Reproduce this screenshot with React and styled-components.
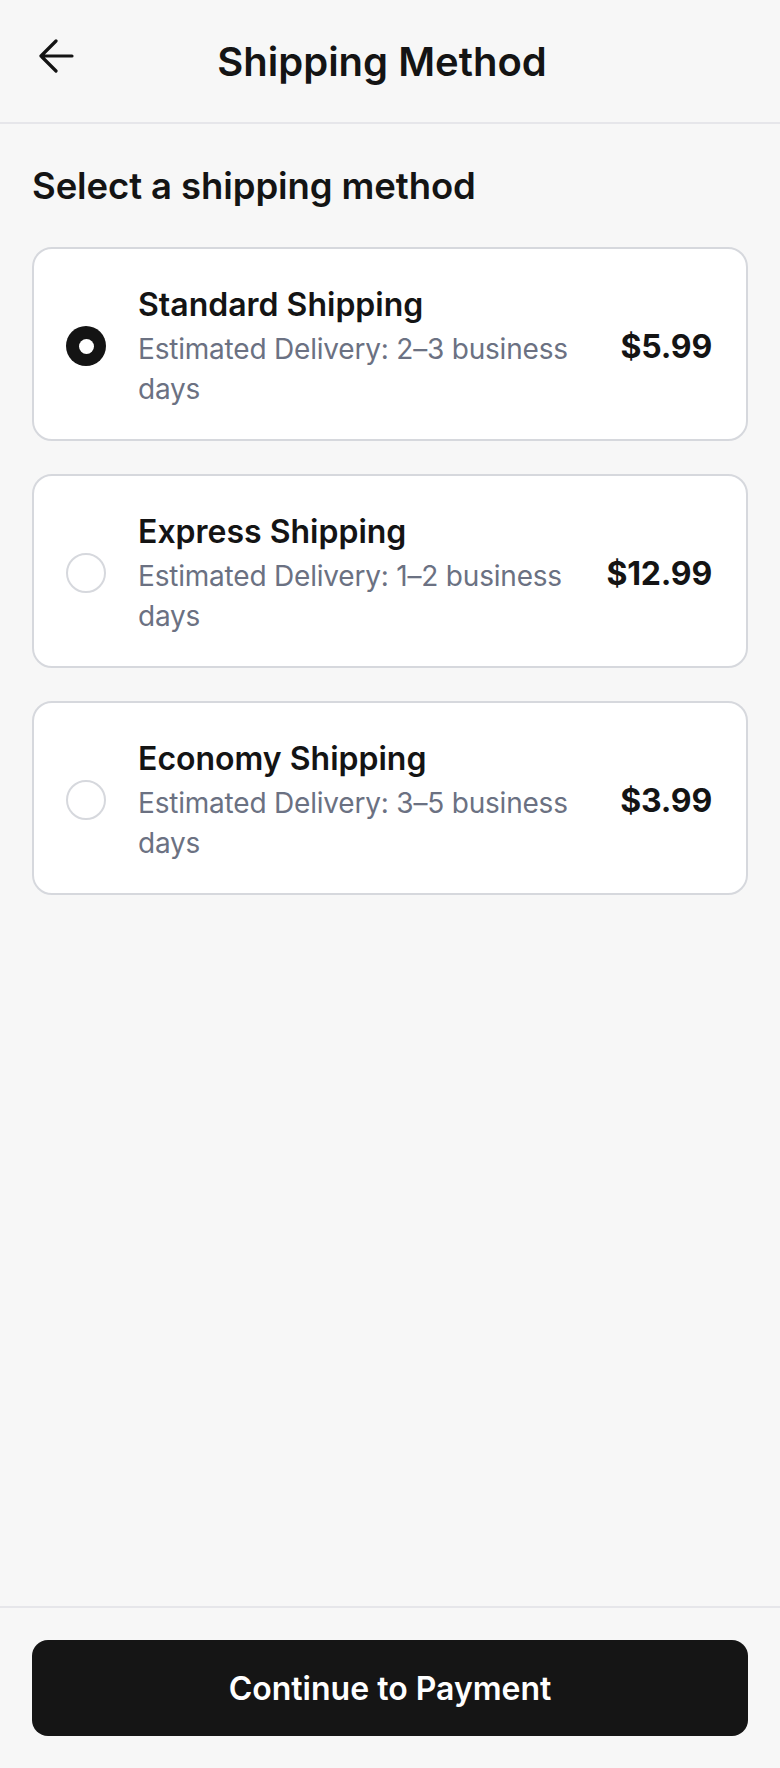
import React, { useState } from 'react'
import styled, { createGlobalStyle } from 'styled-components'

const GlobalStyle = createGlobalStyle`
  * { box-sizing: border-box; }
  html, body { margin: 0; padding: 0; background: #f7f7f7; }
  body {
    font-family: Inter, "Noto Sans", "Liberation Sans", sans-serif;
    color: #141414;
    -webkit-font-smoothing: antialiased;
  }
`

const Page = styled.div`
  min-height: 100vh;
  display: flex;
  flex-direction: column;
  background: #f7f7f7;
`

const Header = styled.header`
  display: flex;
  align-items: flex-start;
  padding: 32px 32px 30px;
  border-bottom: 2px solid #e6e6ea;
`

const BackButton = styled.button`
  width: 48px;
  height: 48px;
  padding: 0 0 0 6px;
  border: none;
  background: transparent;
  display: flex;
  align-items: center;
  justify-content: flex-start;
  color: #141414;
  cursor: pointer;
`

const Title = styled.h1`
  flex: 1;
  margin: 0;
  text-align: center;
  font-size: 40px;
  line-height: 60px;
  font-weight: 600;
  letter-spacing: 0;
`

const Spacer = styled.div`
  width: 64px;
`

const Main = styled.main`
  flex: 1;
  padding: 38px 32px 32px;
`

const Heading = styled.h2`
  margin: 0 0 37px;
  font-size: 36.5px;
  line-height: 48px;
  font-weight: 600;
  letter-spacing: -0.1px;
`

const List = styled.div`
  display: flex;
  flex-direction: column;
  gap: 33px;
`

const Card = styled.label`
  display: flex;
  align-items: center;
  gap: 32px;
  padding: 34px 34px 30px 32px;
  background: #fff;
  border: 2px solid #d6d8dd;
  border-radius: 20px;
  cursor: pointer;
`

const Radio = styled.span`
  flex: none;
  width: 40px;
  height: 40px;
  border-radius: 50%;
  display: flex;
  align-items: center;
  justify-content: center;
  background: ${({ checked }) => (checked ? '#141414' : '#fff')};
  border: ${({ checked }) => (checked ? 'none' : '2px solid #d6d8dd')};

  &::after {
    content: '';
    display: ${({ checked }) => (checked ? 'block' : 'none')};
    width: 15px;
    height: 15px;
    border-radius: 50%;
    background: #fff;
  }
`

const Info = styled.div`
  flex: 1;
  min-width: 0;
`

const Name = styled.div`
  font-size: 32px;
  line-height: 44px;
  font-weight: 600;
  letter-spacing: 0;
`

const Desc = styled.div`
  margin-top: 2px;
  font-size: 28px;
  line-height: 40px;
  color: #6b7182;
  letter-spacing: -0.2px;
`

const Price = styled.div`
  flex: none;
  font-size: 32px;
  font-weight: 700;
  letter-spacing: -0.2px;
`

const Footer = styled.footer`
  padding: 32px;
  border-top: 2px solid #e6e6ea;
`

const ContinueButton = styled.button`
  width: 100%;
  height: 96px;
  border: none;
  border-radius: 16px;
  background: #151515;
  color: #fff;
  font-family: inherit;
  font-size: 32px;
  font-weight: 600;
  letter-spacing: 0;
  cursor: pointer;
`

const methods = [
  { id: 'standard', name: 'Standard Shipping', days: '2–3', price: '$5.99' },
  { id: 'express', name: 'Express Shipping', days: '1–2', price: '$12.99' },
  { id: 'economy', name: 'Economy Shipping', days: '3–5', price: '$3.99' },
]

const ArrowLeft = () => (
  <svg width="36" height="34" viewBox="0 0 36 34" fill="none">
    <path
      d="M34 17H3M18 2L3 17l15 15"
      stroke="currentColor"
      strokeWidth="3.2"
      strokeLinecap="round"
      strokeLinejoin="round"
    />
  </svg>
)

export default function App() {
  const [selected, setSelected] = useState('standard')

  return (
    <Page>
      <GlobalStyle />
      <Header>
        <BackButton aria-label="Back">
          <ArrowLeft />
        </BackButton>
        <Title>Shipping Method</Title>
        <Spacer />
      </Header>

      <Main>
        <Heading>Select a shipping method</Heading>
        <List>
          {methods.map((m) => (
            <Card key={m.id} onClick={() => setSelected(m.id)}>
              <Radio checked={selected === m.id} />
              <Info>
                <Name>{m.name}</Name>
                <Desc>{`Estimated Delivery: ${m.days} business days`}</Desc>
              </Info>
              <Price>{m.price}</Price>
            </Card>
          ))}
        </List>
      </Main>

      <Footer>
        <ContinueButton>Continue to Payment</ContinueButton>
      </Footer>
    </Page>
  )
}
